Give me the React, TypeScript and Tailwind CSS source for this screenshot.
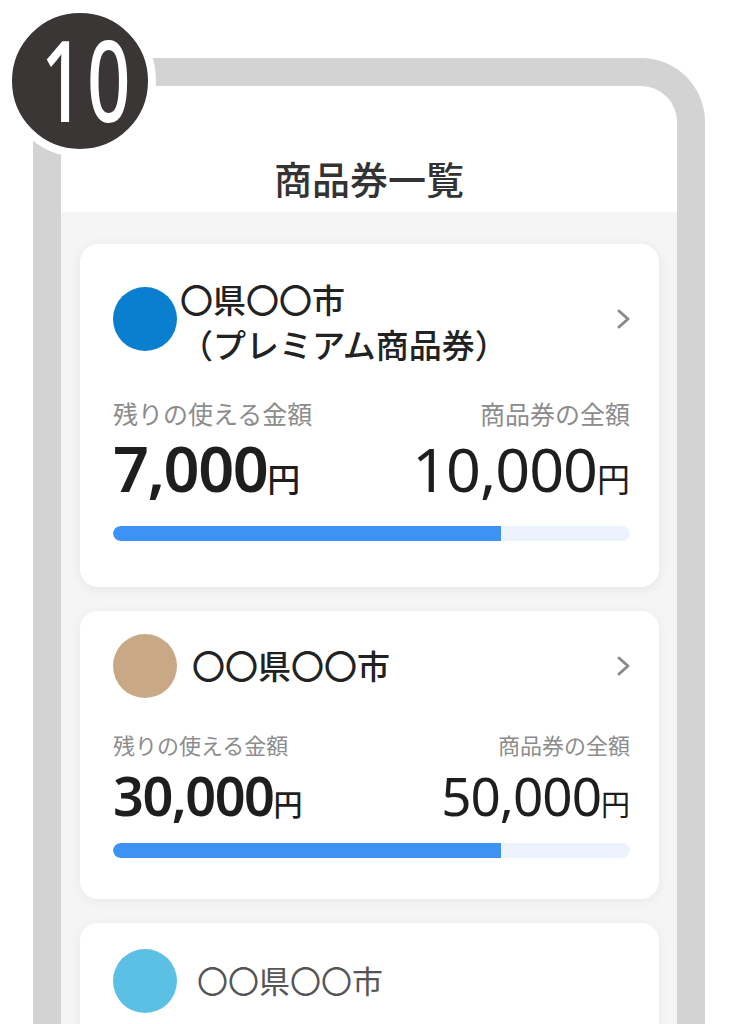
import React from "react";

const FONT = '"Noto Sans", "Noto Sans CJK JP", sans-serif';

function Chevron() {
  return (
    <svg width="16" height="22" viewBox="0 0 16 22" fill="none">
      <path d="M3 3 L12 11 L3 19" stroke="#8a8a8a" strokeWidth="3" strokeLinecap="round" strokeLinejoin="round" />
    </svg>
  );
}

function Bar() {
  return (
    <div className="h-[15px] w-full rounded-full bg-[#edf3fd] overflow-hidden">
      <div className="h-full bg-[#3d93f5] rounded-l-full" style={{ width: "75%" }} />
    </div>
  );
}

export default function App() {
  return (
    <div className="relative w-[738px] h-[1024px] overflow-hidden bg-white" style={{ fontFamily: FONT }}>
      {/* Phone frame */}
      <div className="ml-[33px] mt-[58px] w-[672px] h-[1000px] border-[28px] border-b-0 border-[#d3d3d3] rounded-t-[64px] bg-[#f5f5f5] overflow-hidden">
        <div className="h-[126px] bg-white rounded-t-[36px] flex justify-center pt-[70px]">
          <div className="text-[38px] leading-[46px] font-medium text-[#333]">商品券一覧</div>
        </div>
        <div className="pl-[19px] pr-[18px] pt-[32px] flex flex-col gap-[24px]">
          {/* Card 1 */}
          <div className="bg-white rounded-[18px] shadow-[0_2px_12px_rgba(0,0,0,0.07)] pl-[33px] pr-[29px] pt-[34px] pb-[46px]">
            <div className="flex items-start">
              <div className="w-[64px] h-[64px] rounded-full bg-[#0a7fd0] mt-[9px] shrink-0" />
              <div className="ml-[3px] flex-1 text-[33px] leading-[45px] font-medium text-[#222]">
                <div>〇県〇〇市</div>
                <div>（プレミアム商品券）</div>
              </div>
              <div className="mt-[30px] mr-[-2px]"><Chevron /></div>
            </div>
            <div className="mt-[31px] flex justify-between text-[25px] leading-[30px] text-[#8c8c8c]">
              <span>残りの使える金額</span>
              <span>商品券の全額</span>
            </div>
            <div className="mt-[7px] flex justify-between items-baseline text-[#1e1e1e]">
              <span className="text-[63px] leading-[64px] font-[560] tracking-[-1.5px]">7,000<span className="text-[33px] font-medium tracking-normal">円</span></span>
              <span className="text-[61px] leading-[64px] font-normal tracking-[-1px]">10,000<span className="text-[33px] tracking-normal">円</span></span>
            </div>
            <div className="mt-[14px]"><Bar /></div>
          </div>
          {/* Card 2 */}
          <div className="bg-white rounded-[18px] shadow-[0_2px_12px_rgba(0,0,0,0.05)] pl-[33px] pr-[29px] pt-[23px] pb-[41px]">
            <div className="flex items-center">
              <div className="w-[64px] h-[64px] rounded-full bg-[#c9a886] shrink-0" />
              <div className="ml-[15px] flex-1 text-[33px] leading-[45px] font-medium text-[#222]">〇〇県〇〇市</div>
              <div className="mr-[-2px]"><Chevron /></div>
            </div>
            <div className="mt-[34px] flex justify-between text-[22px] leading-[26px] text-[#8c8c8c]">
              <span>残りの使える金額</span>
              <span>商品券の全額</span>
            </div>
            <div className="mt-[10px] flex justify-between items-baseline text-[#1e1e1e]">
              <span className="text-[54px] leading-[55px] font-[560] tracking-[-1.5px]">30,000<span className="text-[29px] font-medium tracking-normal">円</span></span>
              <span className="text-[53px] leading-[55px] font-normal tracking-[-1px]">50,000<span className="text-[29px] tracking-normal">円</span></span>
            </div>
            <div className="mt-[11px]"><Bar /></div>
          </div>
          {/* Card 3 */}
          <div className="bg-white rounded-[18px] shadow-[0_2px_12px_rgba(0,0,0,0.05)] pl-[33px] pr-[29px] pt-[26px] pb-[40px]">
            <div className="flex items-center">
              <div className="w-[64px] h-[64px] rounded-full bg-[#5bc0e3] shrink-0" />
              <div className="ml-[20px] flex-1 text-[31px] leading-[45px] font-normal text-[#555]">〇〇県〇〇市</div>
            </div>
          </div>
        </div>
      </div>
      {/* Step badge */}
      <div className="absolute left-[4px] top-[5px] w-[152px] h-[152px] rounded-full bg-[#3b3636] border-[8px] border-white flex items-center justify-center">
        <span className="text-white text-[112px] leading-none font-medium scale-x-[0.68] tracking-[4px] ml-[14px] mt-[-4px]">10</span>
      </div>
    </div>
  );
}
